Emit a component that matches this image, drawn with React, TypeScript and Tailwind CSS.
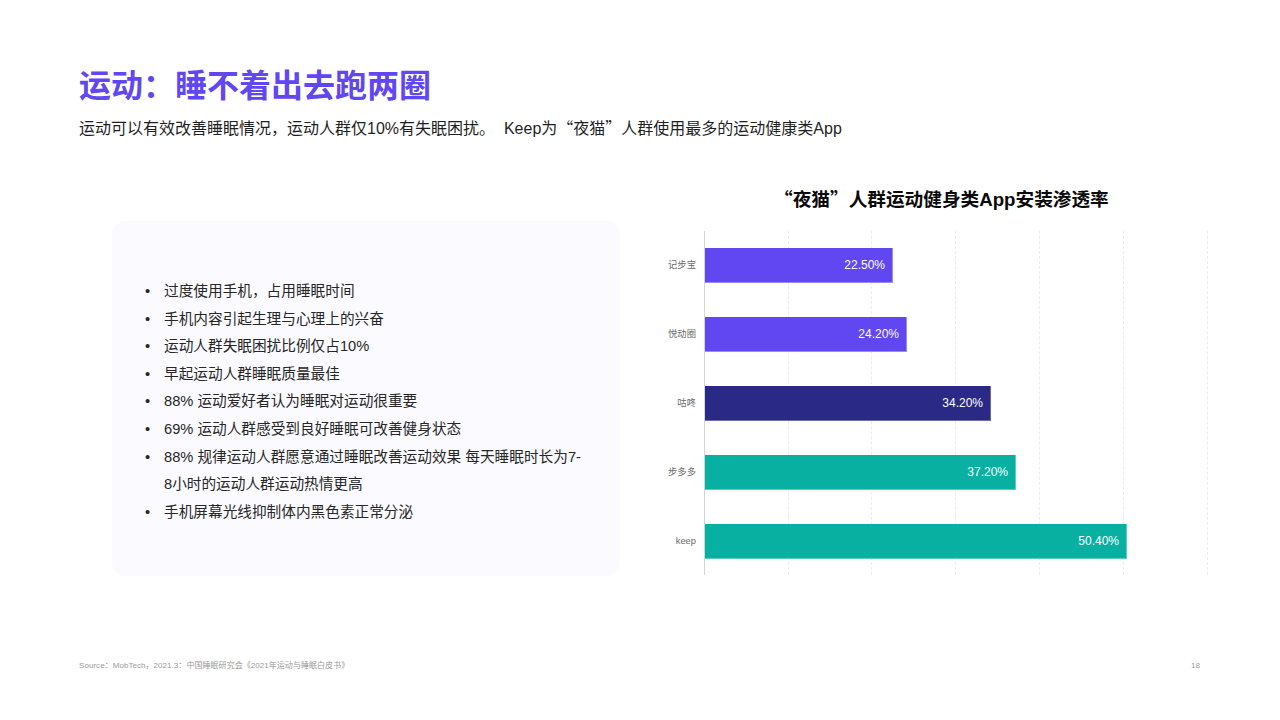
const notes = [
  "过度使用手机，占用睡眠时间",
  "手机内容引起生理与心理上的兴奋",
  "运动人群失眠困扰比例仅占10%",
  "早起运动人群睡眠质量最佳",
  "88% 运动爱好者认为睡眠对运动很重要",
  "69% 运动人群感受到良好睡眠可改善健身状态",
  "88% 规律运动人群愿意通过睡眠改善运动效果 每天睡眠时长为7-8小时的运动人群运动热情更高",
  "手机屏幕光线抑制体内黑色素正常分泌",
];

const bars = [
  { name: "记步宝", value: "22.50%", width: 188, color: "bg-[#6147f2] border-[#9a8bf6]" },
  { name: "悦动圈", value: "24.20%", width: 202, color: "bg-[#6147f2] border-[#9a8bf6]" },
  { name: "咕咚", value: "34.20%", width: 286, color: "bg-[#2a2a86] border-[#6a6aaa]" },
  { name: "步多多", value: "37.20%", width: 311, color: "bg-[#07b0a0] border-[#5ccdc2]" },
  { name: "keep", value: "50.40%", width: 422, color: "bg-[#07b0a0] border-[#5ccdc2]" },
];

const grid = [83, 166, 250, 334, 418, 502];

const App = () => {
  return (
    <div className="w-[1280px] h-[720px] bg-white overflow-hidden flex flex-col pl-[79px] font-['Liberation_Sans','Noto_Sans_CJK_SC',sans-serif]">
      <h1 className="mt-[63px] h-[46px] text-[32px] leading-[46px] font-bold text-[#6147f2]">
        运动：睡不着出去跑两圈
      </h1>
      <p className="mt-[6px] h-[24px] text-[16px] leading-[24px] text-[#1f1f1f] whitespace-pre">
        运动可以有效改善睡眠情况，运动人群仅10%有失眠困扰。  Keep为
        <span className="font-['Noto_Sans_CJK_SC',sans-serif]">“夜猫”</span>
        人群使用最多的运动健康类App
      </p>

      <div className="mt-[48px] flex items-start">
        <div className="mt-[34px] ml-[33px] w-[508px] h-[355px] rounded-[14px] bg-[#fbfaff] pl-[33px] pr-[36px] pt-[57px]">
          <ul className="text-[14.67px] leading-[27.6px] text-[#262626]">
            {notes.map((note) => (
              <li key={note} className="flex">
                <span className="w-[19px] shrink-0">•</span>
                <span>{note}</span>
              </li>
            ))}
          </ul>
        </div>

        <div className="-mt-[2px] ml-[28px] w-[560px] flex flex-col">
          <h2 className="h-[26px] pl-[126px] text-[18.67px] leading-[26px] font-bold text-[#0a0a0a] whitespace-nowrap">
            <span className="font-['Noto_Sans_CJK_SC',sans-serif]">“夜猫”</span>
            人群运动健身类App安装渗透率
          </h2>
          <div className="relative mt-[20px] ml-[56px] h-[344px] border-l border-[#d4d4d4] pt-[17px] flex flex-col gap-[34px]">
            {grid.map((x) => (
              <div
                key={x}
                className="absolute top-0 bottom-0 border-l border-dashed border-[#ececec]"
                style={{ left: x }}
              />
            ))}
            {bars.map((bar) => (
              <div key={bar.name} className="relative h-[35px] flex items-center">
                <span className="absolute right-full mr-[9px] text-[9.33px] text-[#6b6b6b] whitespace-nowrap">
                  {bar.name}
                </span>
                <div
                  className={`h-full ${bar.color} border-r border-b flex items-center justify-end pr-[7px] text-[12px] text-white`}
                  style={{ width: bar.width }}
                >
                  {bar.value}
                </div>
              </div>
            ))}
          </div>
        </div>
      </div>

      <div className="mt-[84px] w-[1121px] flex justify-between text-[8px] leading-[12px] text-[#999999]">
        <span className="tracking-[0.05px]">Source：MobTech，2021.3：中国睡眠研究会《2021年运动与睡眠白皮书》</span>
        <span>18</span>
      </div>
    </div>
  );
};

export default App;
